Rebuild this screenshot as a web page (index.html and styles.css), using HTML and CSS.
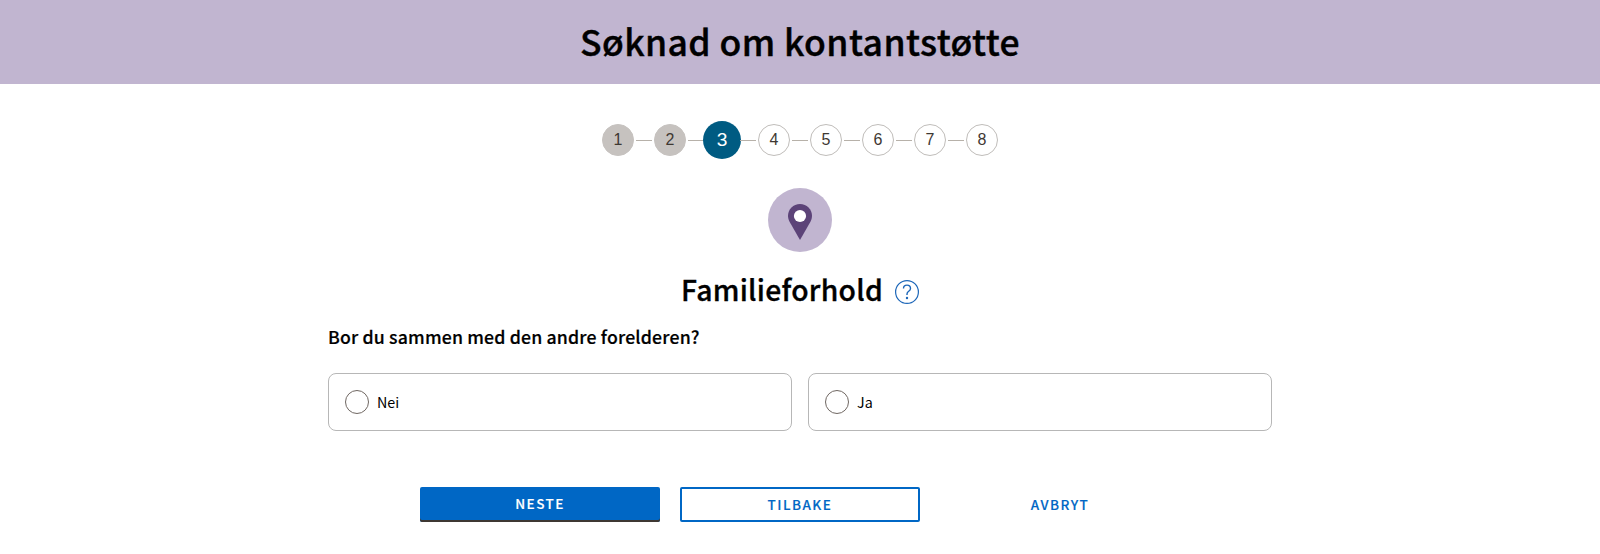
FILE: index.html
```html
<!DOCTYPE html>
<html lang="nb">
<head>
<meta charset="utf-8">
<title>Søknad om kontantstøtte</title>
<link rel="stylesheet" href="styles.css">
</head>
<body>
<header class="banner"><h1 class="banner-title">Søknad om kontantstøtte</h1></header>
<main class="page">
  <ol class="steps">
    <li class="step done">1</li>
    <li class="step done">2</li>
    <li class="step active"><span class="step-disc">3</span></li>
    <li class="step">4</li>
    <li class="step">5</li>
    <li class="step">6</li>
    <li class="step">7</li>
    <li class="step">8</li>
  </ol>
  <svg class="pin" width="64" height="64" viewBox="0 0 64 64">
    <circle cx="32" cy="32" r="32" fill="#c1b5d0"/>
    <path d="M32 16c6.800 0 12 5.200 12 11.800 0 2.200-.6 4.100-1.700 6.200L32 52 21.700 34c-1.100-2.100-1.700-4-1.700-6.200C20 21.200 25.200 16 32 16z" fill="#5c4378"/>
    <circle cx="32" cy="28" r="6.100" fill="#fff"/>
  </svg>
  <div class="heading">
    <h2 class="title">Familieforhold</h2>
    <svg class="help" width="24" height="24" viewBox="0 0 24 24" fill="none" stroke="#1c66b8">
      <circle cx="12" cy="12" r="11.400" stroke-width="1.200"/>
      <path stroke-width="1.400" d="M8.500 8.500c0-2 1.500-3.400 3.500-3.400s3.500 1.400 3.500 3.300c0 2.900-3.500 2.900-3.500 5.600v1"/>
      <circle cx="12" cy="18" r="1.200" fill="#1c66b8" stroke="none"/>
    </svg>
  </div>
  <fieldset class="question">
    <legend class="legend">Bor du sammen med den andre forelderen?</legend>
    <div class="options">
      <label class="option"><span class="radio"></span><span class="option-text">Nei</span></label>
      <label class="option"><span class="radio"></span><span class="option-text">Ja</span></label>
    </div>
  </fieldset>
  <div class="actions">
    <button class="button primary">NESTE</button>
    <button class="button secondary">TILBAKE</button>
    <button class="button flat">AVBRYT</button>
  </div>
</main>
</body>
</html>
```
FILE: styles.css
```css
* { box-sizing: border-box; }
body {
  margin: 0;
  background: #fff;
  color: #000;
  font-family: "Source Sans Pro", "Noto Sans CJK SC", sans-serif;
}
.banner {
  height: 84px;
  background: #c1b5d0;
  display: flex;
  justify-content: center;
}
.banner-title {
  margin: 0;
  font-size: 35.500px;
  line-height: 82px;
  font-weight: 500;
  letter-spacing: .42px;
  -webkit-text-stroke: .4px currentColor;
}
.page {
  width: 944px;
  margin: 0 auto;
  display: flex;
  flex-direction: column;
  align-items: center;
}
.steps {
  list-style: none;
  display: flex;
  gap: 20px;
  margin: 40px 0 0;
  padding: 0;
  font-family: "Liberation Sans", Arial, sans-serif;
  font-size: 16px;
  color: #3e3832;
}
.step {
  position: relative;
  width: 32px;
  height: 32px;
  border: 1px solid #c0bdba;
  border-radius: 50%;
  display: flex;
  align-items: center;
  justify-content: center;
}
.step + .step::before {
  content: "";
  position: absolute;
  right: 33px;
  top: 15px;
  width: 16px;
  height: 1px;
  background: #b7b1a9;
}
.done { background: #c6c2bf; border-color: #c6c2bf; }
.active { border-color: transparent; color: #fff; font-size: 19.200px; }
.step-disc {
  flex: none;
  position: relative;
  width: 38.400px;
  height: 38.400px;
  border-radius: 50%;
  background: #005b82;
  display: flex;
  align-items: center;
  justify-content: center;
}
.pin { margin-top: 32px; }
.heading {
  display: flex;
  align-items: center;
  gap: 12px;
  height: 40px;
  margin-top: 18px;
}
.title {
  margin: -2px 0 0;
  font-size: 28.300px;
  line-height: 40px;
  font-weight: 500;
  letter-spacing: .27px;
  -webkit-text-stroke: .35px currentColor;
}
.help { margin-top: 4px; }
.question { width: 944px; margin: 16px 0 0; padding: 0; border: 0; }
.legend {
  padding: 0;
  font-size: 17.700px;
  line-height: 20px;
  font-weight: 500;
  letter-spacing: .16px;
  -webkit-text-stroke: .2px currentColor;
}
.options {
  display: grid;
  grid-template-columns: 1fr 1fr;
  gap: 16px;
  margin-top: 27px;
}
.option {
  height: 58px;
  border: 1px solid #b7b7b7;
  border-radius: 8px;
  padding: 0 16px;
  display: flex;
  align-items: center;
  gap: 8px;
}
.radio { width: 24px; height: 24px; border: 1px solid #6f6762; border-radius: 50%; }
.option-text { font-size: 14.300px; line-height: 22px; }
.actions { display: flex; gap: 20px; margin-top: 56px; }
.button {
  width: 240px;
  height: 35px;
  padding: 0;
  border: 0;
  border-radius: 2px;
  background: transparent;
  color: #0067c5;
  font-family: inherit;
  font-size: 13.500px;
  line-height: 31px;
  font-weight: 500;
  letter-spacing: 1.480px;
  -webkit-text-stroke: .15px currentColor;
}
.primary { background: #0067c5; color: #fff; box-shadow: inset 0 -2px 0 #3e3832; padding-bottom: 2px; }
.secondary { border: 2px solid #0067c5; }
```
